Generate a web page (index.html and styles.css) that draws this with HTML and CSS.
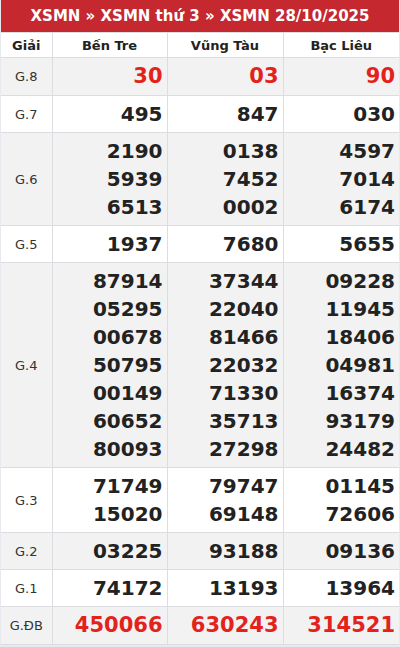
FILE: index.html
```html
<!DOCTYPE html>
<html lang="vi">
<head>
<meta charset="utf-8">
<title>XSMN 28/10/2025</title>
<link rel="stylesheet" href="styles.css">
</head>
<body>
<div class="box">
  <div class="title">XSMN » XSMN thứ 3 » XSMN 28/10/2025</div>
  <table class="kq">
    <colgroup><col class="c0"><col class="c1"><col class="c2"><col class="c3"></colgroup>
    <thead>
      <tr><th>Giải</th><th>Bến Tre</th><th>Vũng Tàu</th><th>Bạc Liêu</th></tr>
    </thead>
    <tbody>
      <tr class="alt"><td class="g">G.8</td><td class="n big red">30</td><td class="n big red">03</td><td class="n big red">90</td></tr>
      <tr><td class="g">G.7</td><td class="n">495</td><td class="n">847</td><td class="n">030</td></tr>
      <tr class="alt"><td class="g">G.6</td><td class="n">2190<br>5939<br>6513</td><td class="n">0138<br>7452<br>0002</td><td class="n">4597<br>7014<br>6174</td></tr>
      <tr><td class="g">G.5</td><td class="n">1937</td><td class="n">7680</td><td class="n">5655</td></tr>
      <tr class="alt"><td class="g">G.4</td><td class="n">87914<br>05295<br>00678<br>50795<br>00149<br>60652<br>80093</td><td class="n">37344<br>22040<br>81466<br>22032<br>71330<br>35713<br>27298</td><td class="n">09228<br>11945<br>18406<br>04981<br>16374<br>93179<br>24482</td></tr>
      <tr><td class="g">G.3</td><td class="n">71749<br>15020</td><td class="n">79747<br>69148</td><td class="n">01145<br>72606</td></tr>
      <tr class="alt"><td class="g">G.2</td><td class="n">03225</td><td class="n">93188</td><td class="n">09136</td></tr>
      <tr><td class="g">G.1</td><td class="n">74172</td><td class="n">13193</td><td class="n">13964</td></tr>
      <tr class="alt"><td class="g">G.ĐB</td><td class="n big red">450066</td><td class="n big red">630243</td><td class="n big red">314521</td></tr>
    </tbody>
  </table>
</div>
</body>
</html>
```
FILE: styles.css
```css
html, body {
  margin: 0;
  padding: 0;
  background: #e6e9ee;
}
body {
  font-family: "DejaVu Sans", sans-serif;
  color: #222;
}
.box {
  width: 398px;
  margin: 0 1px;
  background: #fff;
}
.title {
  background: #c5282f;
  color: #fff;
  font-weight: bold;
  font-size: 15px;
  height: 32px;
  line-height: 32px;
  text-align: center;
}
.kq {
  width: 100%;
  border-collapse: collapse;
  table-layout: fixed;
}
.c0 { width: 51px; }
.c1 { width: 115px; }
.c2 { width: 116px; }
.c3 { width: 116px; }
.kq th, .kq td {
  border: 1px solid #dcdde1;
}
.kq tr > :first-child { border-left: none; }
.kq tr > :last-child { border-right: none; }
.kq th {
  font-size: 13px;
  font-weight: bold;
  height: 24px;
  padding: 0;
  text-align: center;
  color: #222;
}
.kq td {
  padding: 4px 4px 4px 0;
}
.kq tr.alt td { background: #f2f2f2; }
.g {
  font-size: 13px;
  text-align: center;
  color: #333;
  padding-left: 0 !important;
  padding-right: 0 !important;
}
.n {
  text-align: right;
  font-weight: bold;
  font-size: 20px;
  line-height: 28px;
  color: #222;
}
.n.big {
  font-size: 21px;
  line-height: 29px;
}
.red { color: #e3231b; }
```
